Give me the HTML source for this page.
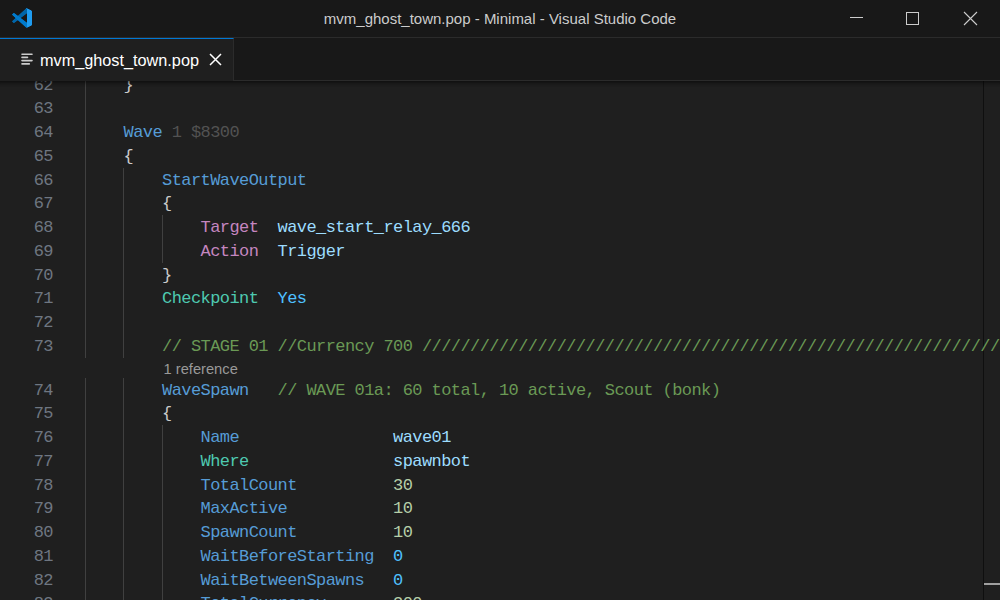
<!DOCTYPE html>
<html><head><meta charset="utf-8">
<style>
html,body{margin:0;padding:0;width:1000px;height:600px;overflow:hidden;background:#1f1f1f;}
*{box-sizing:border-box;}
#title{position:absolute;left:0;top:0;width:1000px;height:38px;background:#181818;border-bottom:1px solid #2b2b2b;}
#title .t{position:absolute;left:0;width:1000px;top:9px;text-align:center;font:15px/20px "Liberation Sans",sans-serif;color:#cccccc;white-space:nowrap;}
#logo{position:absolute;left:12px;top:8px;width:20px;height:20px;}
.wc{position:absolute;top:0;}
#tabs{position:absolute;left:0;top:38px;width:1000px;height:43px;background:#181818;border-bottom:1px solid #2b2b2b;}
#tab{position:absolute;left:0;top:0;width:234px;height:43px;background:#1f1f1f;border-top:1px solid #0078d4;border-right:1px solid #2b2b2b;}
#tab .n{position:absolute;left:40px;top:11px;font:16.25px/20px "Liberation Sans",sans-serif;color:#ffffff;white-space:nowrap;}
#editor{position:absolute;left:0;top:81px;width:1000px;height:519px;background:#1f1f1f;overflow:hidden;}
#shadow{position:absolute;left:0;top:0;width:1000px;height:6px;box-shadow:#000000 0 6px 6px -6px inset;}
.ln{position:absolute;left:0;width:53px;text-align:right;font-family:"Liberation Mono",monospace;font-size:17px;letter-spacing:-0.575px;line-height:23.75px;height:23.75px;color:#6e7681;white-space:pre;}
.cl{position:absolute;left:85px;font-family:"Liberation Mono",monospace;font-size:17px;letter-spacing:-0.575px;line-height:23.75px;height:23.75px;color:#cccccc;white-space:pre;}
.g{position:absolute;width:1px;background:#404040;}
.lens{position:absolute;left:163.5px;font:14.7px/20px "Liberation Sans",sans-serif;color:#999999;white-space:pre;}
.k{color:#569cd6}.d{color:#525252}.p{color:#c586c0}.v{color:#9cdcfe}.tl{color:#4ec9b0}.c{color:#6a9955}.nu{color:#b5cea8}.z{color:#4fc1ff}.b{color:#cccccc}
#ruler{position:absolute;left:983px;top:0;width:1px;height:519px;background:#0f0f0f;}
#cur{position:absolute;left:984px;top:502px;width:16px;height:2px;background:#a0a0a0;}
</style></head>
<body>
<div id="title">
  <svg id="logo" viewBox="0 0 100 100"><defs><mask id="m0" maskUnits="userSpaceOnUse" x="0" y="0" width="100" height="100"><path fill="#fff" fill-rule="evenodd" d="M70.9119 99.3171C72.4869 99.9307 74.2828 99.8914 75.8725 99.1264L96.4608 89.2197C98.6242 88.1787 100 85.9892 100 83.5872V16.4133C100 14.0113 98.6243 11.8218 96.4609 10.7808L75.8725 0.873756C73.7862 -0.130129 71.3446 0.11576 69.5135 1.44695C69.252 1.63711 69.0028 1.84943 68.769 2.08341L29.3551 38.0415L12.1872 25.0096C10.589 23.7965 8.35363 23.8959 6.86933 25.2461L1.36303 30.2549C-0.452552 31.9064 -0.454633 34.7627 1.35853 36.417L16.2471 50.0001L1.35853 63.5832C-0.454633 65.2374 -0.452552 68.0938 1.36303 69.7453L6.86933 74.7541C8.35363 76.1043 10.589 76.2037 12.1872 74.9905L29.3551 61.9587L68.769 97.9167C69.3925 98.5406 70.1246 99.0104 70.9119 99.3171ZM75.0152 27.2989L45.1091 50.0001L75.0152 72.7012V27.2989Z"/></mask></defs><g mask="url(#m0)"><path fill="#0065A9" d="M96.4614 10.7962L75.8569 0.875542C73.4719 -0.272773 70.6217 0.211611 68.75 2.08333L1.29858 63.5832C-0.515693 65.2373 -0.513607 68.0937 1.30308 69.7452L6.81272 74.754C8.29793 76.1042 10.5347 76.2036 12.1338 74.9905L93.3609 13.3699C96.086 11.3026 100 13.2462 100 16.6667V16.4275C100 14.0265 98.6246 11.8378 96.4614 10.7962Z"/><path fill="#007ACC" d="M96.4614 89.2038L75.8569 99.1245C73.4719 100.273 70.6217 99.7884 68.75 97.9167L1.29858 36.4169C-0.515693 34.7627 -0.513607 31.9063 1.30308 30.2548L6.81272 25.246C8.29793 23.8958 10.5347 23.7964 12.1338 25.0095L93.3609 86.6301C96.086 88.6974 100 86.7538 100 83.3334V83.5726C100 85.9735 98.6246 88.1622 96.4614 89.2038Z"/><path fill="#1F9CF0" d="M75.8578 99.1263C73.4721 100.274 70.6219 99.7885 68.75 97.9166C71.0564 100.223 75 98.5895 75 95.3278V4.67213C75 1.41039 71.0564 -0.223106 68.75 2.08329C70.6219 0.211402 73.4721 -0.273666 75.8578 0.873633L96.4587 10.7807C98.6234 11.8217 100 14.0112 100 16.4132V83.5871C100 85.9891 98.6234 88.1786 96.4586 89.2196L75.8578 99.1263Z"/></g></svg>
  <div class="t">mvm_ghost_town.pop - Minimal - Visual Studio Code</div>
  <svg class="wc" style="left:840px" width="160" height="37" viewBox="0 0 160 37">
    <line x1="10" y1="17.5" x2="23" y2="17.5" stroke="#cccccc" stroke-width="1"/>
    <rect x="66.5" y="12.5" width="12" height="12" fill="none" stroke="#cccccc" stroke-width="1"/>
    <path d="M124 12L137 25M137 12L124 25" stroke="#cccccc" stroke-width="1.1"/>
  </svg>
</div>
<div id="tabs">
  <div id="tab">
    <svg style="position:absolute;left:18px;top:13px" width="18" height="14" viewBox="0 0 18 14">
      <path d="M4 2.25H14M4 5.4H9.5M4 8.6H14M4 11.9H11.3" stroke="#cccccc" stroke-width="1.6" stroke-linecap="round"/>
    </svg>
    <div class="n">mvm_ghost_town.pop</div>
    <svg style="position:absolute;left:208px;top:13px" width="15" height="15" viewBox="0 0 15 15">
      <path d="M2 2L13 13M13 2L2 13" stroke="#ffffff" stroke-width="1.5"/>
    </svg>
  </div>
</div>
<div id="editor">
<div id="ruler"></div><div id="cur"></div>
<div class="ln" style="top:-7.50px">62</div>
<div class="cl" style="top:-7.50px"><span class="b">    }</span></div>
<div class="ln" style="top:16.25px">63</div>
<div class="ln" style="top:40.00px">64</div>
<div class="cl" style="top:40.00px"><span class="k">    Wave</span><span class="d"> 1 $8300</span></div>
<div class="ln" style="top:63.75px">65</div>
<div class="cl" style="top:63.75px"><span class="b">    {</span></div>
<div class="ln" style="top:87.50px">66</div>
<div class="cl" style="top:87.50px"><span class="k">        StartWaveOutput</span></div>
<div class="ln" style="top:111.25px">67</div>
<div class="cl" style="top:111.25px"><span class="b">        {</span></div>
<div class="ln" style="top:135.00px">68</div>
<div class="cl" style="top:135.00px"><span class="p">            Target</span><span class="v">  wave_start_relay_666</span></div>
<div class="ln" style="top:158.75px">69</div>
<div class="cl" style="top:158.75px"><span class="p">            Action</span><span class="v">  Trigger</span></div>
<div class="ln" style="top:182.50px">70</div>
<div class="cl" style="top:182.50px"><span class="b">        }</span></div>
<div class="ln" style="top:206.25px">71</div>
<div class="cl" style="top:206.25px"><span class="tl">        Checkpoint</span><span class="z">  Yes</span></div>
<div class="ln" style="top:230.00px">72</div>
<div class="ln" style="top:253.75px">73</div>
<div class="cl" style="top:253.75px"><span class="c">        // STAGE 01 //Currency 700 ////////////////////////////////////////////////////////////////////////////////////////////////////////////////////////</span></div>
<div class="ln" style="top:297.55px">74</div>
<div class="cl" style="top:297.55px"><span class="k">        WaveSpawn</span><span class="c">   // WAVE 01a: 60 total, 10 active, Scout (bonk)</span></div>
<div class="ln" style="top:321.30px">75</div>
<div class="cl" style="top:321.30px"><span class="b">        {</span></div>
<div class="ln" style="top:345.05px">76</div>
<div class="cl" style="top:345.05px"><span class="k">            Name</span><span class="v">                wave01</span></div>
<div class="ln" style="top:368.80px">77</div>
<div class="cl" style="top:368.80px"><span class="tl">            Where</span><span class="v">               spawnbot</span></div>
<div class="ln" style="top:392.55px">78</div>
<div class="cl" style="top:392.55px"><span class="k">            TotalCount</span><span class="nu">          30</span></div>
<div class="ln" style="top:416.30px">79</div>
<div class="cl" style="top:416.30px"><span class="k">            MaxActive</span><span class="nu">           10</span></div>
<div class="ln" style="top:440.05px">80</div>
<div class="cl" style="top:440.05px"><span class="k">            SpawnCount</span><span class="nu">          10</span></div>
<div class="ln" style="top:463.80px">81</div>
<div class="cl" style="top:463.80px"><span class="k">            WaitBeforeStarting</span><span class="z">  0</span></div>
<div class="ln" style="top:487.55px">82</div>
<div class="cl" style="top:487.55px"><span class="k">            WaitBetweenSpawns</span><span class="z">   0</span></div>
<div class="ln" style="top:511.30px">83</div>
<div class="cl" style="top:511.30px"><span class="k">            TotalCurrency</span><span class="nu">       300</span></div>
<div class="lens" style="top:277.90px">1 reference</div>
<div class="g" style="left:85px;top:0.00px;height:276.70px"></div>
<div class="g" style="left:85px;top:296.75px;height:222.25px"></div>
<div class="g" style="left:123px;top:86.70px;height:190.00px"></div>
<div class="g" style="left:123px;top:296.75px;height:222.25px"></div>
<div class="g" style="left:162px;top:134.20px;height:47.50px"></div>
<div class="g" style="left:162px;top:344.25px;height:174.75px"></div>
<div id="shadow"></div>
</div>
</body></html>
